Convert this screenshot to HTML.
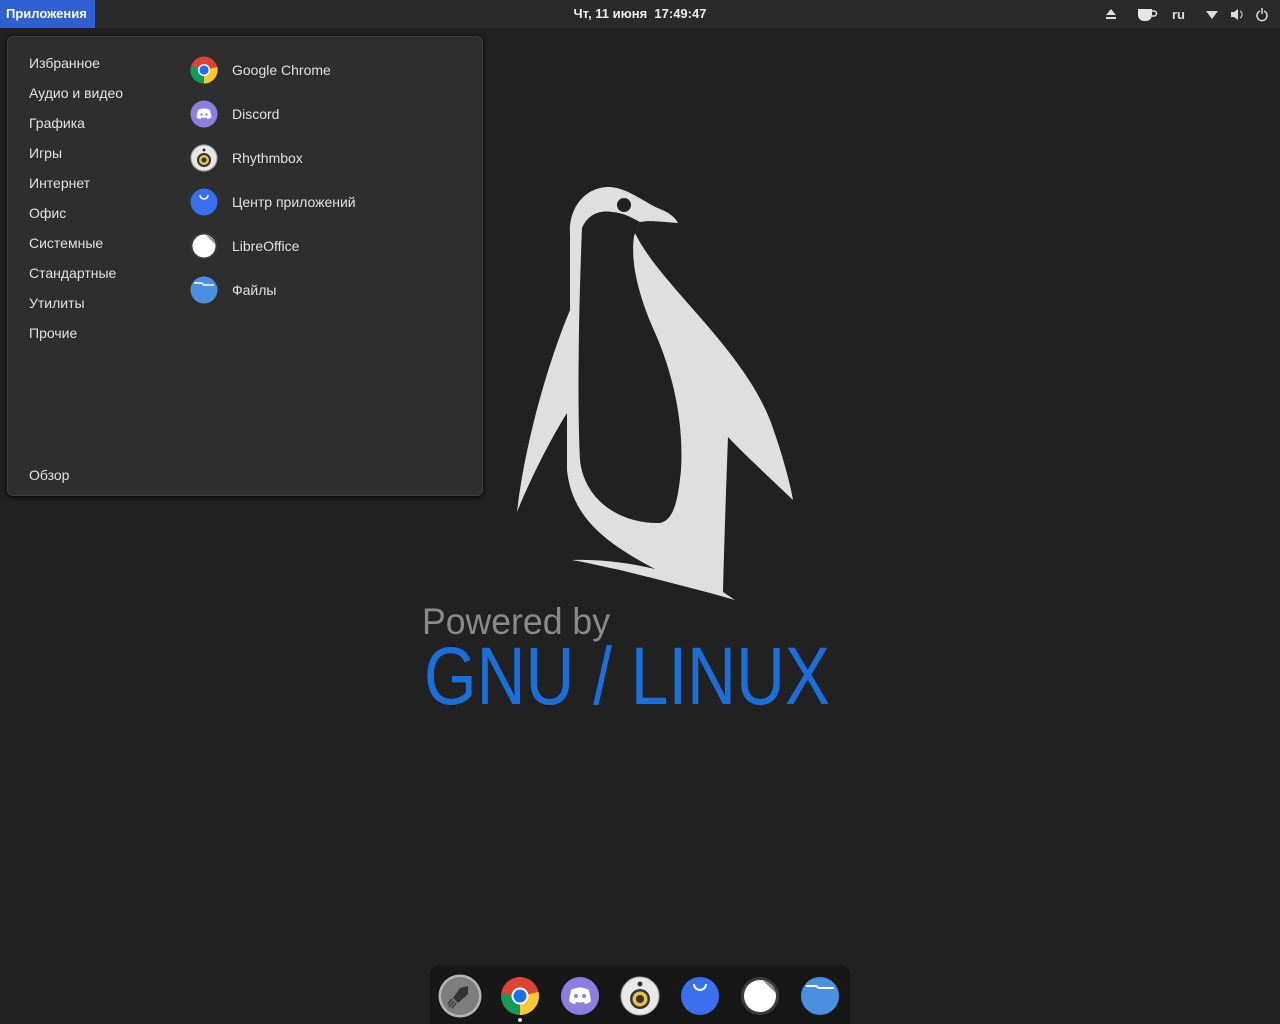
<!DOCTYPE html>
<html><head><meta charset="utf-8"><style>
*{margin:0;padding:0;box-sizing:border-box}
body{width:1280px;height:1024px;background:#212121;font-family:"Liberation Sans","DejaVu Sans",sans-serif;position:relative;overflow:hidden;color:#ddd}
#top{position:absolute;left:0;top:0;width:1280px;height:28px;background:#2a2a2a;}
#apps{position:absolute;left:0;top:0;width:95px;height:28px;background:#2f5fd0;color:#fff;font-size:13px;font-weight:bold;line-height:28px;padding-left:6px}
#clock{position:absolute;left:0;width:1280px;text-align:center;top:0;line-height:28px;font-size:13px;font-weight:bold;color:#eee}
#menu{position:absolute;left:7px;top:36px;width:476px;height:460px;background:#2e2e2e;border:1px solid #3e3e3e;border-radius:6px;box-shadow:0 1px 4px #000}
.cat{position:absolute;left:21px;font-size:14px;color:#e2e2e2}
.app{position:absolute;left:182px;height:30px;display:flex;align-items:center}
.app span{margin-left:14px;font-size:14px;color:#e2e2e2}
.ic{width:28px;height:28px;border-radius:50%;position:relative}
#dock{position:absolute;left:430px;top:966px;width:420px;height:58px;background:#171717;border-radius:8px 8px 0 0}
.d{position:absolute;top:8px;width:44px;height:44px}
</style></head><body>
<div id="top"><div id="apps">Приложения</div><div id="clock">Чт, 11 июня&nbsp; 17:49:47</div>
<svg style="position:absolute;left:1100px;top:6px" width="170" height="16">
<path d="M6,9 L11,3 L16,9Z M6,11h10v2H6z" fill="#ddd"/>
<path d="M38,3h14v6a6,6 0 0 1-6,6h-2a6,6 0 0 1-6-6z" fill="#e6e6e6"/><path d="M52,5h2a2,2 0 0 1 0,5h-2" stroke="#e6e6e6" stroke-width="1.5" fill="none"/>
<text x="72" y="13" font-size="13" font-weight="bold" fill="#ddd" font-family="Liberation Sans">ru</text>
<path d="M106,5 L118,5 L112,13Z" fill="#ddd"/>
<path d="M131,6h3l4-3v11l-4-3h-3z" fill="#ddd"/><path d="M140,5a4,4 0 0 1 0,7" stroke="#ddd" fill="none"/>
<path d="M160,5a5,5 0 1 0 4,0" stroke="#ddd" stroke-width="1.5" fill="none"/><path d="M162,2v6" stroke="#ddd" stroke-width="1.5"/>
</svg></div>

<div id="menu">
<div class="cat" style="top:18px">Избранное</div>
<div class="cat" style="top:48px">Аудио и видео</div>
<div class="cat" style="top:78px">Графика</div>
<div class="cat" style="top:108px">Игры</div>
<div class="cat" style="top:138px">Интернет</div>
<div class="cat" style="top:168px">Офис</div>
<div class="cat" style="top:198px">Системные</div>
<div class="cat" style="top:228px">Стандартные</div>
<div class="cat" style="top:258px">Утилиты</div>
<div class="cat" style="top:288px">Прочие</div>
<div class="cat" style="top:430px">Обзор</div>

<div class="app" style="top:18px"><svg class="ic" viewBox="0 0 28 28"><circle cx="14" cy="14" r="13.5" fill="#db4437"/><path d="M14,14 L2.3,20.7 A13.5,13.5 0 0 0 14,27.5Z" fill="#0f9d58"/><path d="M14,14 L1,10 A13.5,13.5 0 0 0 8,26Z" fill="#0f9d58"/><path d="M14,14 L27.3,11 A13.5,13.5 0 0 1 14,27.5Z" fill="#fcc934"/><circle cx="14" cy="14" r="6" fill="#fff"/><circle cx="14" cy="14" r="4.6" fill="#1a73e8"/></svg><span>Google Chrome</span></div>
<div class="app" style="top:62px"><svg class="ic" viewBox="0 0 28 28"><circle cx="14" cy="14" r="13.5" fill="#8c7fe0"/><path d="M8,10q6-3 12,0l1.5,7q-2,2-4,2l-1-1.5q-2.5,.8-5,0l-1,1.5q-2,0-4-2z" fill="#fff"/><circle cx="11.5" cy="14.5" r="1.2" fill="#8c7fe0"/><circle cx="16.5" cy="14.5" r="1.2" fill="#8c7fe0"/></svg><span>Discord</span></div>
<div class="app" style="top:106px"><svg class="ic" viewBox="0 0 28 28"><circle cx="14" cy="14" r="13.5" fill="#e8e8e8"/><circle cx="14" cy="14" r="13" fill="none" stroke="#999" stroke-width="1"/><circle cx="14" cy="6" r="1.5" fill="#333"/><circle cx="14" cy="16" r="7" fill="#333"/><circle cx="14" cy="16" r="5" fill="#e9c33b"/><circle cx="14" cy="16" r="2.5" fill="#333"/></svg><span>Rhythmbox</span></div>
<div class="app" style="top:150px"><svg class="ic" viewBox="0 0 28 28"><circle cx="14" cy="14" r="13.5" fill="#3a6ff0"/><path d="M10,7a4,4 0 0 0 8,0" stroke="#fff" stroke-width="1.6" fill="none"/></svg><span>Центр приложений</span></div>
<div class="app" style="top:194px"><svg class="ic" viewBox="0 0 28 28"><circle cx="14" cy="14" r="13.5" fill="#3a3a3a"/><circle cx="14" cy="14" r="11.5" fill="#fff"/><path d="M16,3 L25,12 A11.5,11.5 0 0 0 16,3Z" fill="#888"/></svg><span>LibreOffice</span></div>
<div class="app" style="top:238px"><svg class="ic" viewBox="0 0 28 28"><circle cx="14" cy="14" r="13.5" fill="#4a8fe0"/><path d="M4,7h8l2,2h10" stroke="#fff" stroke-width="1.4" fill="none"/></svg><span>Файлы</span></div>
</div>

<svg style="position:absolute;left:0;top:0" width="1280" height="1024">
<path d="M570,235 C568,205 588,186 610,187 C628,188 645,203 660,209 C668,212 675,217 678,223 C662,222 650,220 640,222 L635,233 C660,285 740,345 770,420 C784,458 791,488 793,500 C770,478 746,456 728,437 C726,490 724,550 723,592 L735,600 C700,590 660,580 620,570 C600,566 585,562 572,560 C600,559 630,563 655,569 C610,545 572,520 567,470 L567,413 C550,440 530,480 517,512 C524,450 545,370 570,310 Z" fill="#dfdfdf"/>
<path d="M582,228 C588,214 600,210 612,212 C625,213 632,218 640,222 L634,236 C630,265 640,300 656,335 C672,372 684,420 681,470 C678,500 674,520 660,523 C620,524 584,500 580,460 C577,400 579,300 582,228 Z" fill="#212121"/>
<circle cx="624" cy="205" r="7" fill="#212121"/>
<text x="422" y="634" font-size="37" fill="#8a8a8a" textLength="188" lengthAdjust="spacingAndGlyphs" font-family="Liberation Sans">Powered by</text>
<text x="424" y="704" font-size="82" fill="#1b6fdc" textLength="406" lengthAdjust="spacingAndGlyphs" font-family="Liberation Sans">GNU / LINUX</text>
</svg>

<div id="dock">
<svg class="d" style="left:8px" viewBox="0 0 44 44"><circle cx="22" cy="22" r="21.5" fill="#b5b5b5"/><circle cx="22" cy="22" r="19" fill="#7e7e7e"/><path d="M30,12 L22,14 L15,24 L20,29 L30,20Z" fill="#333"/><path d="M16,27 L11,33 M18,29 L14,34 M14,25 L10,30" stroke="#444" stroke-width="2"/></svg>
<svg class="d" style="left:68px" viewBox="0 0 44 44"><circle cx="22" cy="22" r="19" fill="#db4437"/><path d="M22,22 L3.5,20 A19,19 0 0 0 22,41Z" fill="#0f9d58"/><path d="M22,22 L40.5,18 A19,19 0 0 1 22,41Z" fill="#fcc934"/><circle cx="22" cy="22" r="8.5" fill="#fff"/><circle cx="22" cy="22" r="6.5" fill="#1a73e8"/></svg>
<div style="position:absolute;left:88px;top:52px;width:4px;height:4px;border-radius:50%;background:#ddd"></div>
<svg class="d" style="left:128px" viewBox="0 0 44 44"><circle cx="22" cy="22" r="19" fill="#8c7fe0"/><path d="M13,16q9-5 18,0l2,11q-3,3-6,3l-1.5-2q-3.5,1-7,0l-1.5,2q-3,0-6-3z" fill="#fff"/><circle cx="18" cy="22" r="2" fill="#8c7fe0"/><circle cx="26" cy="22" r="2" fill="#8c7fe0"/></svg>
<svg class="d" style="left:188px" viewBox="0 0 44 44"><circle cx="22" cy="22" r="19" fill="#e8e8e8"/><circle cx="22" cy="22" r="19" fill="none" stroke="#aaa"/><circle cx="22" cy="10" r="2.5" fill="#333"/><circle cx="22" cy="25" r="10" fill="#333"/><circle cx="22" cy="25" r="7.5" fill="#e9c33b"/><circle cx="22" cy="25" r="4" fill="#333"/></svg>
<svg class="d" style="left:248px" viewBox="0 0 44 44"><circle cx="22" cy="22" r="19" fill="#3a6ff0"/><path d="M16,10a6,6 0 0 0 12,0" stroke="#fff" stroke-width="2" fill="none"/></svg>
<svg class="d" style="left:308px" viewBox="0 0 44 44"><circle cx="22" cy="22" r="19" fill="#3c3c3c"/><circle cx="22" cy="22" r="16" fill="#fff"/><path d="M25,6.5 L37.5,19 A16,16 0 0 0 25,6.5Z" fill="#888"/></svg>
<svg class="d" style="left:368px" viewBox="0 0 44 44"><circle cx="22" cy="22" r="19" fill="#4a8fe0"/><path d="M8,12h10l3,2h15" stroke="#fff" stroke-width="2" fill="none"/></svg>
</div>
</body></html>
